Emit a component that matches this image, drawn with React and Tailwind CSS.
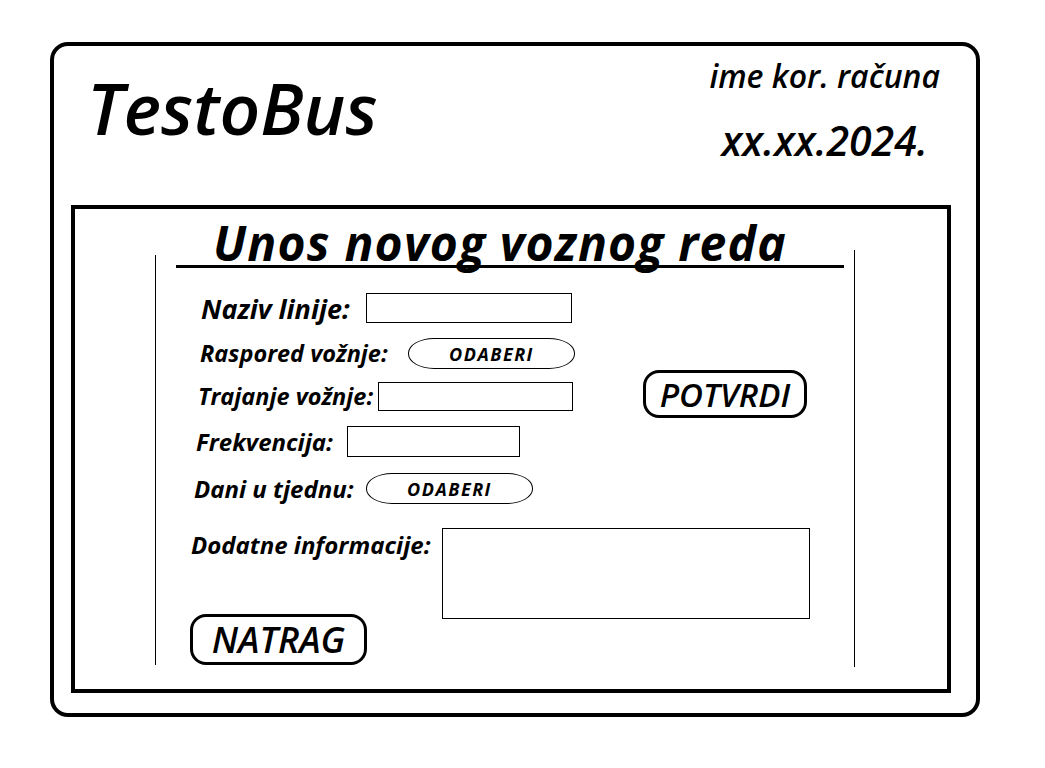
import React from "react";

const font = { fontFamily: '"Open Sans", "Noto Sans", sans-serif' };

const Odaberi = () => (
  <button className="h-[31px] w-[167px] rounded-[26px/15px] border border-black text-[18px] leading-none font-bold italic tracking-[1.5px] text-black">
    ODABERI
  </button>
);

const Field = ({ className }) => (
  <div className={`border border-black bg-white ${className}`} />
);

export default function App() {
  return (
    <div
      className="w-[1045px] h-[768px] bg-white pt-[42px] pl-[50px] text-black"
      style={font}
    >
      {/* Outer frame */}
      <div className="w-[930px] h-[675px] border-4 border-black rounded-[18px]">
        {/* Header */}
        <div className="flex justify-between h-[159px]">
          <div className="ml-[33px] mt-[26px] text-[71px] leading-none font-semibold italic">
            TestoBus
          </div>
          <div className="mr-[36px] mt-[14px] flex flex-col items-center">
            <div className="text-[32px] leading-none font-semibold italic">ime kor. računa</div>
            <div className="mt-[28px] text-[41px] leading-none font-semibold italic">xx.xx.2024.</div>
          </div>
        </div>

        {/* Inner frame */}
        <div className="ml-[17px] w-[880px] h-[488px] border-4 border-black flex">
          <div className="ml-[80px] mt-[46px] w-px h-[410px] bg-black shrink-0" />

          <div className="w-[698px] shrink-0 flex flex-col">
            {/* Title */}
            <div className="ml-[20px] w-[668px] border-b-[3px] border-black mt-[11px] pl-[37px]">
              <div className="text-[48px] leading-[45px] font-bold italic tracking-[1.2px] whitespace-nowrap">
                Unos novog voznog reda
              </div>
            </div>

            <div className="flex">
              <div className="flex flex-col w-[420px] shrink-0">
                <div className="flex items-center mt-[25px] ml-[45px]">
                  <span className="w-[165px] text-[27px] font-bold italic leading-none">Naziv linije:</span>
                  <Field className="w-[206px] h-[30px]" />
                </div>
                <div className="flex items-center mt-[15px] ml-[44px]">
                  <span className="w-[208px] text-[23.5px] font-bold italic leading-none">Raspored vožnje:</span>
                  <Odaberi />
                </div>
                <div className="flex items-center mt-[13px] ml-[42px]">
                  <span className="w-[180px] text-[23.5px] font-bold italic leading-none">Trajanje vožnje:</span>
                  <Field className="w-[195px] h-[29px]" />
                </div>
                <div className="flex items-center mt-[15px] ml-[40px]">
                  <span className="w-[151px] text-[24px] font-bold italic leading-none">Frekvencija:</span>
                  <Field className="w-[173px] h-[31px]" />
                </div>
                <div className="flex items-center mt-[16px] ml-[38px]">
                  <span className="w-[172px] text-[24px] font-bold italic leading-none">Dani u tjednu:</span>
                  <Odaberi />
                </div>
              </div>
              <div className="ml-[67px] mt-[102px]">
                <button className="w-[164px] h-[48px] border-[3px] border-black rounded-[16px] text-[33px] font-semibold italic leading-none">
                  POTVRDI
                </button>
              </div>
            </div>

            <div className="flex mt-[24px] ml-[35px]">
              <span className="w-[251px] text-[24px] font-bold italic leading-none mt-[5px]">Dodatne informacije:</span>
              <div className="w-[368px] h-[91px] border border-black" />
            </div>

            <div className="ml-[34px] -mt-[5px]">
              <button className="w-[177px] h-[51px] border-[3px] border-black rounded-[16px] text-[36px] font-semibold italic leading-none">
                NATRAG
              </button>
            </div>
          </div>

          <div className="mt-[41px] w-px h-[417px] bg-black shrink-0" />
        </div>
      </div>
    </div>
  );
}
